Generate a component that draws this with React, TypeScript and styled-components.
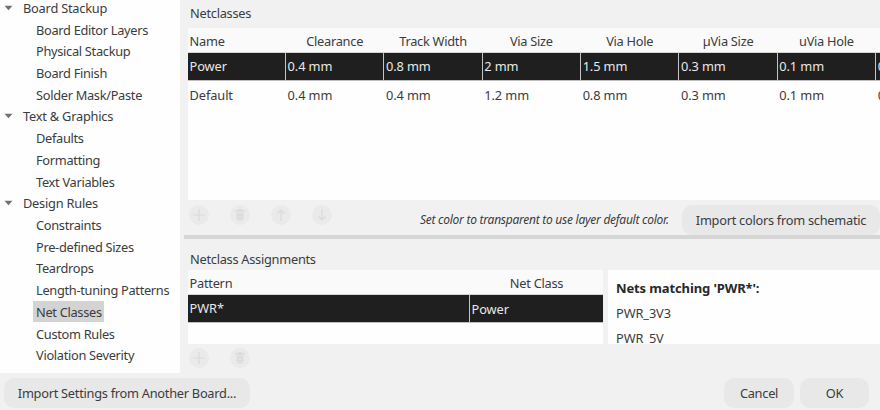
import React from 'react';
import styled, { createGlobalStyle, css } from 'styled-components';

const GlobalStyle = createGlobalStyle`
  * { box-sizing: border-box; }
  html, body { margin: 0; padding: 0; overflow: hidden; }
  body { font-family: "Noto Sans", "Open Sans", sans-serif; font-size: 12.8px; letter-spacing: -0.27px; color: #3b3c3d; }
`;

const Dialog = styled.div`
  width: 880px;
  height: 410px;
  display: flex;
  flex-direction: column;
  overflow: hidden;
  background: #f1f1f1;
  white-space: nowrap;
`;

const Body = styled.div`
  display: flex;
  height: 373px;
`;

const Sidebar = styled.nav`
  width: 180px;
  height: 373px;
  flex: none;
  background: #fefefe;
  overflow: hidden;
`;

const Tree = styled.div`
  margin-top: -3px;
`;

const TreeRow = styled.div<{ $group?: boolean }>`
  display: flex;
  align-items: center;
  height: 21.72px;
  padding-left: ${(p) => (p.$group ? '4px' : '33px')};
  gap: ${(p) => (p.$group ? '7px' : '0')};
  letter-spacing: ${(p) => (p.$group ? '-0.22px' : '-0.3px')};
`;

const TreeLabel = styled.span<{ $selected?: boolean }>`
  display: flex;
  align-items: center;
  height: 21px;
  padding: 0 3px;
  ${(p) => p.$selected && css`
    padding-right: 2px;
    background: #d3d3d3;
  `}
`;

const Content = styled.main`
  width: 700px;
  flex: none;
  display: flex;
  flex-direction: column;
  overflow: hidden;
`;

const SectionTitle = styled.div<{ $height: number; $top: number }>`
  height: ${(p) => p.$height}px;
  flex: none;
  padding: ${(p) => p.$top}px 0 0 10px;
  line-height: 20px;
`;

const Grid = styled.div<{ $width: number; $height: number }>`
  width: ${(p) => p.$width}px;
  height: ${(p) => p.$height}px;
  flex: none;
  background: #fefefe;
  overflow: hidden;
`;

const GridRow = styled.div<{ $columns: string; $kind: 'head' | 'selected' | 'plain' }>`
  display: grid;
  grid-template-columns: ${(p) => p.$columns};
  align-items: stretch;
  height: ${(p) => (p.$kind === 'head' ? 25 : 28)}px;
  border-bottom: 1px solid transparent;
  ${(p) => p.$kind === 'head' && css`
    padding-top: 2px;
    background: #fafafa;
    border-bottom-color: #d4d4d4;
  `}
  ${(p) => p.$kind === 'selected' && css`
    background: #1f1f1f;
    color: #e8e8e8;
    border-bottom-color: #c0c0c0;
  `}
  ${(p) => p.$kind !== 'head' && css`letter-spacing: -0.1px;`}
`;

const Cell = styled.div<{ $align?: 'center'; $line?: boolean }>`
  display: flex;
  align-items: center;
  justify-content: ${(p) => (p.$align === 'center' ? 'center' : 'flex-start')};
  padding-left: ${(p) => (p.$align === 'center' ? 0 : 1.6)}px;
  padding-bottom: ${(p) => (p.$line ? 1 : 0)}px;
  border-right: 1px solid ${(p) => (p.$line ? '#c4c4c4' : 'transparent')};
  overflow: hidden;
`;

const Toolbar = styled.div`
  display: flex;
  height: 35px;
  flex: none;
  padding-left: 9px;
`;

const ToolButtons = styled.div<{ $top: number }>`
  display: flex;
  gap: 21px;
  padding-top: ${(p) => p.$top}px;
`;

const ToolButton = styled.button`
  width: 20px;
  height: 20px;
  padding: 0;
  border: 0;
  border-radius: 50%;
  background: #eaeaea;
  display: grid;
  place-items: center;
`;

const Note = styled.em`
  margin-left: 88px;
  line-height: 39px;
  font-size: 12px;
  letter-spacing: -0.26px;
`;

const Button = styled.button<{ $width: number }>`
  width: ${(p) => p.$width}px;
  height: 30px;
  flex: none;
  padding: 0;
  border: 0;
  border-radius: 10px;
  background: #e8e8e8;
  color: inherit;
  font: inherit;
  letter-spacing: inherit;
  line-height: 30px;
`;

const ColorButton = styled(Button)`
  margin: 5px 0 0 auto;
`;

const Splitter = styled.div`
  height: 4px;
  flex: none;
  margin-left: 4px;
  background: #d6d6d6;
`;

const Panes = styled.div`
  display: flex;
  gap: 5px;
  padding-left: 8px;
`;

const TopPane = styled.div`
  padding-left: 8px;
`;

const Matches = styled.div`
  width: 272px;
  height: 74px;
  padding: 6px 0 0 8px;
  background: #fefefe;
  overflow: hidden;
  line-height: 25px;
  letter-spacing: -0.1px;
`;

const MatchTitle = styled.div`
  font-weight: 700;
  color: #27292a;
  font-size: 13px;
  letter-spacing: -0.12px;
`;

const Footer = styled.footer`
  display: flex;
  height: 37px;
  flex: none;
  padding: 5px 11px 0 4px;
  gap: 6px;
`;

const Spacer = styled.div`
  flex: 1;
`;

const Caret = () => (
  <svg width="9" height="6" viewBox="0 0 9 6">
    <path d="M0.5 0.8h8L4.5 5.2z" fill="#707070" />
  </svg>
);

const iconPaths = {
  add: 'M7 1v12M1 7h12',
  trash: 'M2 3h10M5 2h4M3.5 5.5h7M3.5 7.5h7M3.5 9.5h7M4 11.5h6',
  up: 'M7 13V2M3.5 5.5L7 2l3.5 3.5',
  down: 'M7 1v11M3.5 8.5L7 12l3.5-3.5',
};

const Tool = ({ icon }: { icon: keyof typeof iconPaths }) => (
  <ToolButton aria-label={icon}>
    <svg width="14" height="14" viewBox="0 0 14 14">
      <path d={iconPaths[icon]} fill="none" stroke="#dbd9d9" strokeWidth={icon === 'trash' ? 1.5 : 1.2} />
    </svg>
  </ToolButton>
);

const groups = [
  { name: 'Board Stackup', items: ['Board Editor Layers', 'Physical Stackup', 'Board Finish', 'Solder Mask/Paste'] },
  { name: 'Text & Graphics', items: ['Defaults', 'Formatting', 'Text Variables'] },
  {
    name: 'Design Rules',
    items: ['Constraints', 'Pre-defined Sizes', 'Teardrops', 'Length-tuning Patterns', 'Net Classes', 'Custom Rules', 'Violation Severity'],
  },
];

const classColumns = '98px repeat(6, 98.35px) 98px';
const headings = ['Name', 'Clearance', 'Track Width', 'Via Size', 'Via Hole', 'µVia Size', 'uVia Hole', ''];
const power = ['Power', '0.4 mm', '0.8 mm', '2 mm', '1.5 mm', '0.3 mm', '0.1 mm', '0 mm'];
const standard = ['Default', '0.4 mm', '0.4 mm', '1.2 mm', '0.8 mm', '0.3 mm', '0.1 mm', '0 mm'];
const assignmentColumns = '282px 134px';

export default function App() {
  return (
    <Dialog>
      <GlobalStyle />
      <Body>
        <Sidebar>
          <Tree>
            {groups.map((group) => (
              <React.Fragment key={group.name}>
                <TreeRow $group>
                  <Caret />
                  <TreeLabel>{group.name}</TreeLabel>
                </TreeRow>
                {group.items.map((item) => (
                  <TreeRow key={item}>
                    <TreeLabel $selected={item === 'Net Classes'}>{item}</TreeLabel>
                  </TreeRow>
                ))}
              </React.Fragment>
            ))}
          </Tree>
        </Sidebar>
        <Content>
          <SectionTitle $height={28} $top={3}>Netclasses</SectionTitle>
          <TopPane>
            <Grid $width={692} $height={172}>
              <GridRow $columns={classColumns} $kind="head">
                {headings.map((text, i) => (
                  <Cell key={i} $align={i ? 'center' : undefined}>{text}</Cell>
                ))}
              </GridRow>
              <GridRow $columns={classColumns} $kind="selected">
                {power.map((text, i) => <Cell key={i} $line>{text}</Cell>)}
              </GridRow>
              <GridRow $columns={classColumns} $kind="plain">
                {standard.map((text, i) => <Cell key={i}>{text}</Cell>)}
              </GridRow>
            </Grid>
          </TopPane>
          <Toolbar>
            <ToolButtons $top={5}>
              <Tool icon="add" />
              <Tool icon="trash" />
              <Tool icon="up" />
              <Tool icon="down" />
            </ToolButtons>
            <Note>Set color to transparent to use layer default color.</Note>
            <ColorButton $width={198}>Import colors from schematic</ColorButton>
          </Toolbar>
          <Splitter />
          <SectionTitle $height={31} $top={10}>Netclass Assignments</SectionTitle>
          <Panes>
            <Grid $width={415} $height={74}>
              <GridRow $columns={assignmentColumns} $kind="head">
                <Cell>Pattern</Cell>
                <Cell $align="center">Net Class</Cell>
              </GridRow>
              <GridRow $columns={assignmentColumns} $kind="selected">
                <Cell $line>PWR*</Cell>
                <Cell>Power</Cell>
              </GridRow>
            </Grid>
            <Matches>
              <MatchTitle>Nets matching 'PWR*':</MatchTitle>
              <div>PWR_3V3</div>
              <div>PWR_5V</div>
            </Matches>
          </Panes>
          <Toolbar>
            <ToolButtons $top={4}>
              <Tool icon="add" />
              <Tool icon="trash" />
            </ToolButtons>
          </Toolbar>
        </Content>
      </Body>
      <Footer>
        <Button $width={246}>Import Settings from Another Board...</Button>
        <Spacer />
        <Button $width={70}>Cancel</Button>
        <Button $width={69}>OK</Button>
      </Footer>
    </Dialog>
  );
}
